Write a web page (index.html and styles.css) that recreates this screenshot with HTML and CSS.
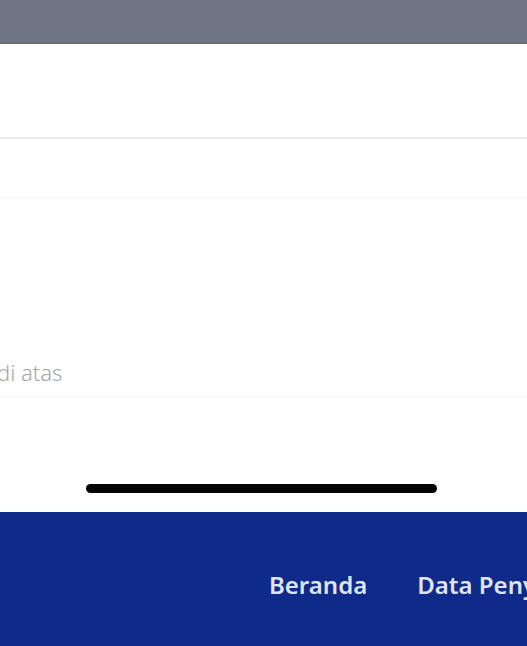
FILE: index.html
```html
<!DOCTYPE html>
<html lang="id">
<head>
<meta charset="utf-8">
<link rel="stylesheet" href="styles.css">
</head>
<body>
<div class="screen">
  <div class="topbar"></div>
  <div class="row row-first"></div>
  <div class="row row-second"></div>
  <div class="field">
    <span class="hint">di atas</span>
  </div>
  <div class="indicator-area">
    <div class="home-indicator"></div>
  </div>
  <nav class="bottom-nav">
    <span class="nav-item">Beranda</span>
    <span class="nav-item">Data Penyakit</span>
  </nav>
</div>
</body>
</html>
```
FILE: styles.css
```css
html, body {
  margin: 0;
  padding: 0;
  background: #ffffff;
}
.screen {
  width: 527px;
  height: 646px;
  overflow: hidden;
  display: flex;
  flex-direction: column;
  font-family: "Noto Sans", "Open Sans", sans-serif;
}
.topbar {
  height: 42px;
  flex: none;
  background: #6f7584;
  border-bottom: 2px solid #686d7a;
}
.row {
  flex: none;
}
.row-first {
  height: 93px;
  border-bottom: 2px solid #ebebeb;
}
.row-second {
  height: 58px;
  border-bottom: 1px solid #f7f7f7;
}
.field {
  flex: none;
  height: 199px;
  border-bottom: 1px solid #f3f3f3;
  display: flex;
  align-items: flex-end;
  padding-bottom: 13px;
  box-sizing: border-box;
}
.hint {
  margin-left: -3px;
  font-size: 22px;
  font-weight: 300;
  color: #a6a6a6;
  line-height: 1;
}
.indicator-area {
  flex: none;
  height: 115px;
  display: flex;
  align-items: flex-start;
  padding-top: 87px;
  padding-left: 86px;
  box-sizing: border-box;
}
.home-indicator {
  width: 351px;
  height: 9px;
  border-radius: 5px;
  background: #050505;
}
.bottom-nav {
  flex: 1;
  background: #0f2a88;
  display: flex;
  align-items: flex-start;
  gap: 50px;
  padding-left: 269px;
  padding-top: 61px;
  white-space: nowrap;
}
.nav-item {
  font-size: 24px;
  font-weight: 600;
  color: #dfe4f7;
  line-height: 1;
}
```
